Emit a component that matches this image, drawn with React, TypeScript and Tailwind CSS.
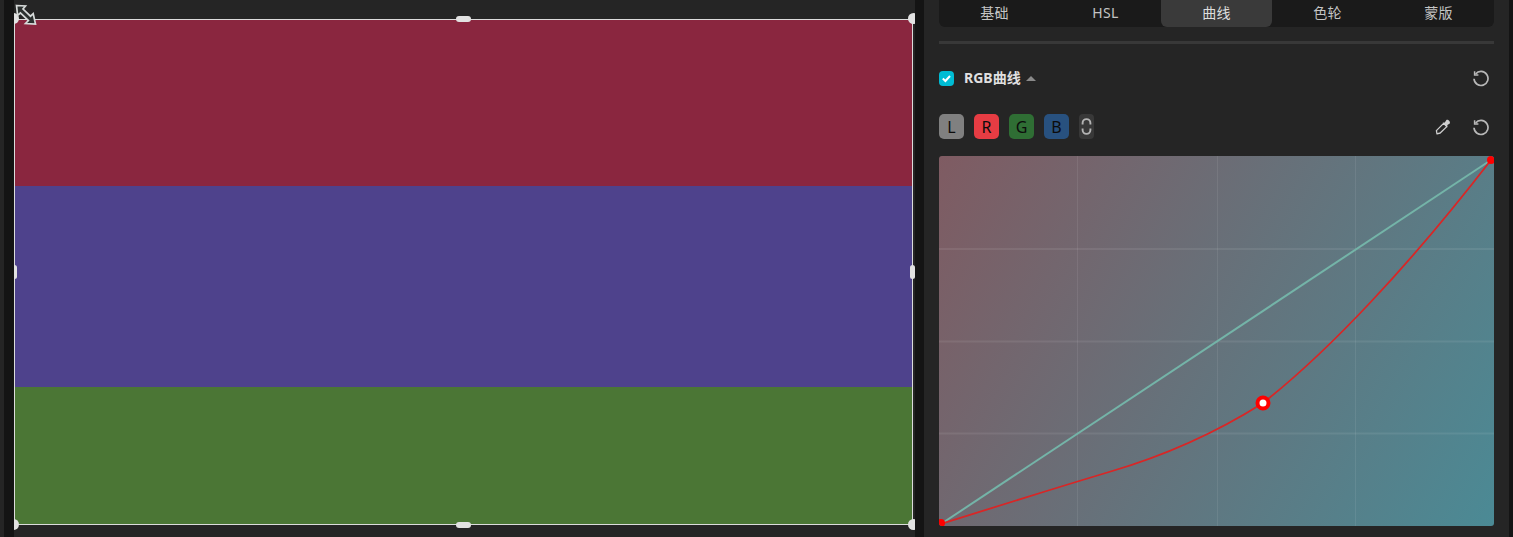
import type { ReactNode } from 'react';

const tabs = ['基础', 'HSL', '曲线', '色轮', '蒙版'];

const channels = [
  { label: 'L', bg: 'bg-[#808080]' },
  { label: 'R', bg: 'bg-[#e63c43]' },
  { label: 'G', bg: 'bg-[#2f6e34]' },
  { label: 'B', bg: 'bg-[#28517f]' },
];

function ResetIcon() {
  return (
    <svg width="18" height="18" viewBox="0 0 18 18" fill="none" stroke="#b8b8b8" strokeWidth="1.7">
      <path d="M3.6 5 A7 7 0 1 1 2 9.8" />
      <path d="M2.6 2.2 V6 H6.4" strokeWidth="1.5" />
    </svg>
  );
}

function PickerIcon() {
  return (
    <svg width="16" height="16" viewBox="0 0 16 16" fill="none">
      <path d="M8.6 4.4 L11.8 7.6 L5.2 14 L2 14.8 L1.4 11.6 Z" stroke="#cfcfcf" strokeWidth="1.3" strokeLinejoin="round" />
      <path d="M7.6 3.8 L9.8 3.6 L11.4 1 C12.8 0 15.8 2.8 14.8 4.4 L12.4 6 L12.2 8.4 Z" fill="#cfcfcf" />
    </svg>
  );
}

function Handle({ className }: { className: string }) {
  return <div className={`absolute bg-[#e2e2e2] ${className}`} />;
}

function ResizeCursor() {
  return (
    <svg className="absolute left-[1px] top-[4px]" width="23" height="22" viewBox="0 0 23 22">
      <path
        d="M1.5 1.5 L10.5 2 L8 5 L15.5 12.2 L18.2 9.6 L20.5 20 L10.5 19.5 L13.4 16.6 L5.4 9 L2.6 11.4 Z"
        fill="#2c3130"
        stroke="#d6dad9"
        strokeWidth="1.7"
        strokeLinejoin="miter"
      />
    </svg>
  );
}

function Canvas() {
  return (
    <div className="relative w-[901px] shrink-0 overflow-hidden bg-[#252525] pt-[19px]">
      <div className="relative h-[506px] w-[899px] border border-[#dcdcdc]">
        <div className="h-[166px] bg-[#8a263f]" />
        <div className="h-[201px] bg-[#4e428c]" />
        <div className="h-[137px] bg-[#4b7635]" />
        <Handle className="-left-[7px] -top-[7px] h-[11px] w-[11px] rounded-full" />
        <Handle className="-right-[7px] -top-[7px] h-[11px] w-[11px] rounded-full" />
        <Handle className="-bottom-[6px] -left-[7px] h-[11px] w-[11px] rounded-full" />
        <Handle className="-bottom-[6px] -right-[7px] h-[11px] w-[11px] rounded-full" />
        <Handle className="-top-[4px] left-[441px] h-[6px] w-[15px] rounded-full" />
        <Handle className="-bottom-[4px] left-[441px] h-[6px] w-[15px] rounded-full" />
        <Handle className="-left-[3px] top-[245px] h-[14px] w-[5px] rounded-full" />
        <Handle className="-right-[3px] top-[245px] h-[14px] w-[5px] rounded-full" />
      </div>
      <ResizeCursor />
    </div>
  );
}

function Row({ children, right }: { children: ReactNode; right: ReactNode }) {
  return (
    <div className="flex items-center justify-between">
      <div className="flex items-center">{children}</div>
      <div className="flex items-center">{right}</div>
    </div>
  );
}

function CurveChart() {
  return (
    <div className="relative mt-[17px] h-[370px] overflow-hidden rounded-[3px] bg-[linear-gradient(120deg,#7f5b62,#4b8a95)]">
      <svg className="absolute inset-0" width="555" height="370" viewBox="0 0 555 370" fill="none">
        <g stroke="#ffffff" strokeOpacity="0.08">
          <path d="M138.5 0V370M278.5 0V370M416.5 0V370" />
          <path d="M0 93H555M0 185.5H555M0 277.5H555" strokeWidth="2" />
        </g>
        <path d="M2 368 L552 4" stroke="#74b4a8" strokeWidth="2" />
        <path
          d="M2 368 C40 356 100 337 170 316 C225 300 275 278 324 247 C390 195 470 110 552 4"
          stroke="#d92626"
          strokeWidth="1.8"
        />
        <circle cx="2" cy="367" r="4" fill="#ff0000" />
        <circle cx="552" cy="4" r="4" fill="#ff0000" />
        <circle cx="324" cy="247" r="5.5" fill="#ffffff" stroke="#ff0000" strokeWidth="4" />
      </svg>
    </div>
  );
}

function CurvePanel() {
  return (
    <div className="w-[585px] shrink-0 bg-[#252525] px-[15px]">
      <div className="grid h-[27px] grid-cols-5 rounded-b-[6px] bg-[#1a1a1a]">
        {tabs.map((tab) => (
          <div
            key={tab}
            className={`flex items-center justify-center rounded-b-[6px] pb-[2px] text-sm tracking-[0.3px] text-[#c4c4c4] ${
              tab === '曲线' ? 'bg-[#3a3a3a] text-[#dedede]' : ''
            }`}
          >
            {tab}
          </div>
        ))}
      </div>
      <div className="mt-[14px] h-[3px] bg-[#383838]" />

      <div className="mt-[24px]">
        <Row right={<span className="mr-[4px]"><ResetIcon /></span>}>
          <div className="flex h-[15px] w-[15px] items-center justify-center rounded-[4px] bg-[#00bcd4]">
            <svg width="11" height="11" viewBox="0 0 11 11" fill="none" stroke="#ffffff" strokeWidth="2">
              <path d="M1.8 5.6 L4.4 8 L9 3" />
            </svg>
          </div>
          <span className="ml-[10px] text-sm font-bold text-[#e0e0e0]">RGB曲线</span>
          <span className="ml-[5px] h-0 w-0 border-x-[5px] border-b-[5px] border-x-transparent border-b-[#8a8a8a]" />
        </Row>
      </div>

      <div className="mt-[26px]">
        <Row
          right={
            <div className="flex items-center gap-[21px] pr-[4px]">
              <PickerIcon />
              <ResetIcon />
            </div>
          }
        >
          <div className="flex items-center gap-[10px]">
            {channels.map((c) => (
              <div
                key={c.label}
                className={`flex h-[25px] w-[25px] items-center justify-center rounded-[5px] text-base text-[#0c0c0c] ${c.bg}`}
              >
                {c.label}
              </div>
            ))}
            <div className="flex h-[25px] w-[15px] items-center justify-center rounded-[4px] bg-[#383838]">
              <svg width="11" height="19" viewBox="0 0 11 19" fill="none" stroke="#b4b4b4" strokeWidth="1.9">
                <path d="M1.6 7.5 V6 A3.9 3.9 0 0 1 9.4 6 V7.5" />
                <path d="M1.6 11.5 V13 A3.9 3.9 0 0 0 9.4 13 V11.5" />
              </svg>
            </div>
          </div>
        </Row>
      </div>

      <CurveChart />
    </div>
  );
}

export default function App() {
  return (
    <div className="flex h-[537px] w-[1513px] overflow-hidden bg-[#141414] font-['Noto_Sans','Noto_Sans_CJK_SC',sans-serif]">
      <div className="w-[4px] shrink-0 bg-[#252525]" />
      <div className="w-[10px] shrink-0" />
      <Canvas />
      <div className="w-[9px] shrink-0" />
      <CurvePanel />
    </div>
  );
}
